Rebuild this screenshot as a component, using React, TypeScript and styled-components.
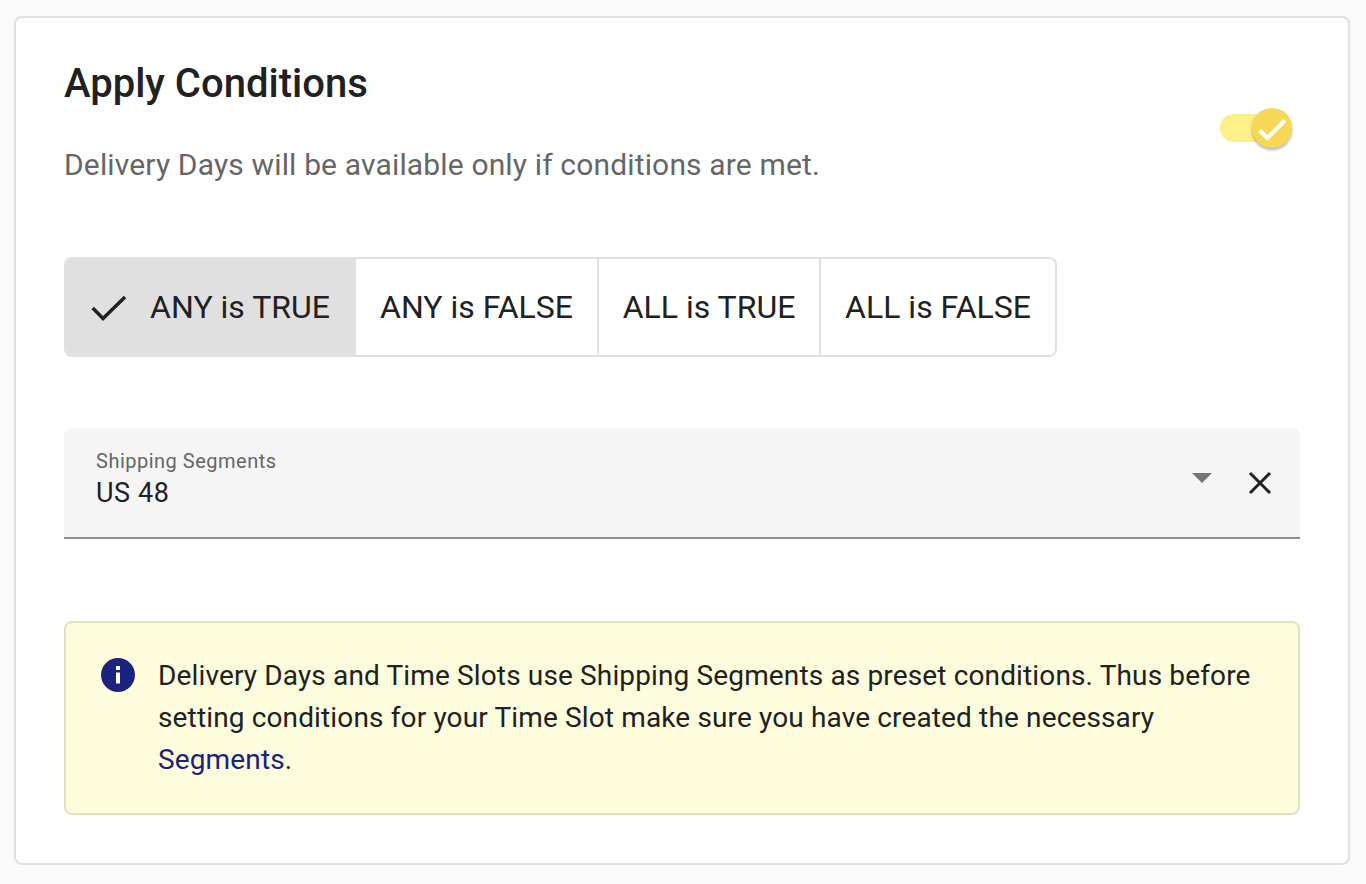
import styled, { createGlobalStyle } from 'styled-components';

const GlobalStyle = createGlobalStyle`
  html, body {
    margin: 0;
    padding: 0;
    background: #fafafa;
    font-family: Roboto, "Liberation Sans", sans-serif;
    color: #212121;
  }
`;

const Card = styled.section`
  box-sizing: border-box;
  width: 1336px;
  height: 849px;
  margin: 16px 0 0 14px;
  padding: 41px 48px 0;
  background: #fff;
  border: 2px solid #e0e0e0;
  border-radius: 8px;
`;

const Header = styled.header`
  display: flex;
  justify-content: space-between;
  align-items: flex-start;
`;

const HeaderText = styled.div`
  display: flex;
  flex-direction: column;
`;

const Title = styled.h1`
  margin: 0;
  font-size: 40px;
  line-height: 50px;
  font-weight: 500;
  color: #212121;
`;

const Subtitle = styled.p`
  margin: 35px 0 0;
  font-size: 30px;
  line-height: 42px;
  letter-spacing: 0.15px;
  color: #666;
`;

const Toggle = styled.div`
  position: relative;
  width: 72px;
  height: 28px;
  margin: 55px 8px 0 0;
  background: #fdf08a;
  border-radius: 14px;
`;

const Knob = styled.span`
  position: absolute;
  top: -6px;
  right: 0;
  width: 40px;
  height: 40px;
  display: flex;
  align-items: center;
  justify-content: center;
  background: #f7d856;
  border-radius: 50%;
  box-shadow: 0 2px 3px rgba(0, 0, 0, 0.3);
`;

const Group = styled.div`
  display: inline-flex;
  height: 100px;
  margin-top: 71px;
  box-sizing: border-box;
  border: 2px solid #e0e0e0;
  border-radius: 8px;
  overflow: hidden;
`;

const Segment = styled.div<{ $active?: boolean; $width: number }>`
  box-sizing: border-box;
  width: ${p => p.$width}px;
  display: flex;
  align-items: center;
  justify-content: center;
  gap: 24px;
  font-size: 32px;
  color: #212121;
  background: ${p => (p.$active ? '#e0e0e0' : '#fff')};
  border-left: ${p => (p.$active ? 'none' : '2px solid #e0e0e0')};
  &:first-child {
    margin: -2px 0 -2px -2px;
    border-radius: 8px 0 0 8px;
  }
  &:nth-child(2) {
    border-left: none;
  }
`;

const Select = styled.div`
  box-sizing: border-box;
  height: 111px;
  margin-top: 71px;
  padding: 20px 32px 0;
  display: flex;
  justify-content: space-between;
  background: #f5f5f5;
  border-bottom: 2px solid #8f8f8f;
  border-radius: 8px 8px 0 0;
`;

const SelectText = styled.div`
  display: flex;
  flex-direction: column;
`;

const SelectLabel = styled.span`
  font-size: 20px;
  line-height: 26px;
  letter-spacing: 0.5px;
  color: #666;
`;

const SelectValue = styled.span`
  margin-top: 1px;
  font-size: 27px;
  line-height: 36px;
  letter-spacing: 0.6px;
  color: #212121;
`;

const SelectActions = styled.div`
  display: flex;
  align-items: center;
  gap: 36px;
  height: 70px;
  margin-right: -4px;
`;

const Caret = styled.span`
  width: 0;
  height: 0;
  margin-bottom: 10px;
  border-left: 10px solid transparent;
  border-right: 10px solid transparent;
  border-top: 10px solid #757575;
`;

const Notice = styled.div`
  box-sizing: border-box;
  height: 194px;
  margin-top: 82px;
  padding: 32px 35px 0;
  display: flex;
  gap: 23px;
  background: #fdfcdc;
  border: 2px solid #e3e2bf;
  border-radius: 8px;
`;

const NoticeIcon = styled.svg`
  flex: none;
  width: 34px;
  height: 34px;
  margin-top: 3px;
`;

const NoticeText = styled.p`
  margin: 0;
  font-size: 28px;
  line-height: 42px;
  letter-spacing: 0.14px;
  color: #212121;
`;

const NoticeLink = styled.a`
  color: #1a237e;
  text-decoration: none;
`;

export default function App() {
  return (
    <>
      <GlobalStyle />
      <Card>
        <Header>
          <HeaderText>
            <Title>Apply Conditions</Title>
            <Subtitle>Delivery Days will be available only if conditions are met.</Subtitle>
          </HeaderText>
          <Toggle>
            <Knob>
              <svg width="28" height="28" viewBox="0 0 28 28" fill="none">
                <path d="M1.5 16.5 L9.5 24 L27 6.5" stroke="#fff" strokeWidth="4" />
              </svg>
            </Knob>
          </Toggle>
        </Header>
        <Group>
          <Segment $active $width={292}>
            <svg width="36" height="32" viewBox="0 0 36 32" fill="none">
              <path d="M2.7 17 L13 27.5 L35 6" stroke="#212121" strokeWidth="3.4" />
            </svg>
            ANY is TRUE
          </Segment>
          <Segment $width={241}>ANY is FALSE</Segment>
          <Segment $width={222}>ALL is TRUE</Segment>
          <Segment $width={236}>ALL is FALSE</Segment>
        </Group>
        <Select>
          <SelectText>
            <SelectLabel>Shipping Segments</SelectLabel>
            <SelectValue>US 48</SelectValue>
          </SelectText>
          <SelectActions>
            <Caret />
            <svg width="24" height="24" viewBox="0 0 24 24" fill="none">
              <path d="M2 2 L22 22 M22 2 L2 22" stroke="#212121" strokeWidth="3" />
            </svg>
          </SelectActions>
        </Select>
        <Notice>
          <NoticeIcon viewBox="0 0 34 34">
            <circle cx="17" cy="17" r="17" fill="#1a237e" />
            <rect x="15" y="8" width="4" height="4" fill="#fff" />
            <rect x="15" y="14.5" width="4" height="11" fill="#fff" />
          </NoticeIcon>
          <NoticeText>
            Delivery Days and Time Slots use Shipping Segments as preset conditions. Thus before setting conditions for your Time Slot make sure you have created the necessary <NoticeLink href="#">Segments</NoticeLink>.
          </NoticeText>
        </Notice>
      </Card>
    </>
  );
}
